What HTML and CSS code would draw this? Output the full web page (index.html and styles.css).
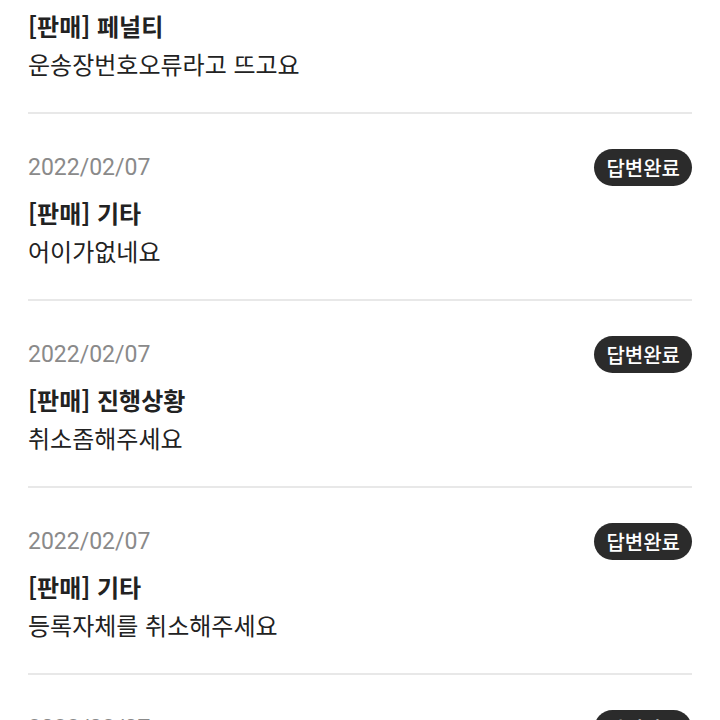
FILE: index.html
```html
<!DOCTYPE html>
<html lang="ko">
<head>
    <meta charset="UTF-8">
    <meta name="viewport" content="width=device-width, initial-scale=1.0">
    <title>1:1 문의내역</title>
    <link rel="stylesheet" href="styles.css">
</head>
<body>
    <ul class="qna-list">
        <li class="qna-item">
            <div class="qna-head">
                <span class="qna-date">2022/02/07</span>
                <span class="badge">답변완료</span>
            </div>
            <p class="qna-title">[판매] 페널티</p>
            <p class="qna-text">운송장번호오류라고 뜨고요</p>
        </li>
        <li class="qna-item">
            <div class="qna-head">
                <span class="qna-date">2022/02/07</span>
                <span class="badge">답변완료</span>
            </div>
            <p class="qna-title">[판매] 기타</p>
            <p class="qna-text">어이가없네요</p>
        </li>
        <li class="qna-item">
            <div class="qna-head">
                <span class="qna-date">2022/02/07</span>
                <span class="badge">답변완료</span>
            </div>
            <p class="qna-title">[판매] 진행상황</p>
            <p class="qna-text">취소좀해주세요</p>
        </li>
        <li class="qna-item">
            <div class="qna-head">
                <span class="qna-date">2022/02/07</span>
                <span class="badge">답변완료</span>
            </div>
            <p class="qna-title">[판매] 기타</p>
            <p class="qna-text">등록자체를 취소해주세요</p>
        </li>
        <li class="qna-item">
            <div class="qna-head">
                <span class="qna-date">2022/02/07</span>
                <span class="badge">답변완료</span>
            </div>
            <p class="qna-title">[판매] 기타</p>
            <p class="qna-text">문의합니다</p>
        </li>
    </ul>
</body>
</html>
```

FILE: styles.css
```css
body {
    margin: 0;
    background-color: #fff;
    color: #222;
    font-family: "Noto Sans CJK KR", "Noto Sans", sans-serif;
    overflow: hidden;
}
.qna-list {
    list-style: none;
    margin: -73px 0 0;
    padding: 0 28px;
}
.qna-item {
    padding: 35px 0 33px;
    border-bottom: 2px solid #e8e8e8;
}
.qna-head {
    display: flex;
    justify-content: space-between;
    align-items: center;
    height: 37px;
}
.qna-date {
    font-size: 23px;
    color: #8a8a8a;
    font-family: Roboto, "Noto Sans CJK KR", sans-serif;
}
.badge {
    background-color: #2b2b2b;
    color: #fff;
    font-size: 20px;
    font-weight: 500;
    height: 37px;
    line-height: 37px;
    padding: 0 12px;
    border-radius: 19px;
}
.qna-title {
    margin: 12px 0 0;
    font-size: 24px;
    font-weight: bold;
    line-height: 30px;
}
.qna-text {
    margin: 8px 0 0;
    font-size: 24px;
    line-height: 30px;
}
```
